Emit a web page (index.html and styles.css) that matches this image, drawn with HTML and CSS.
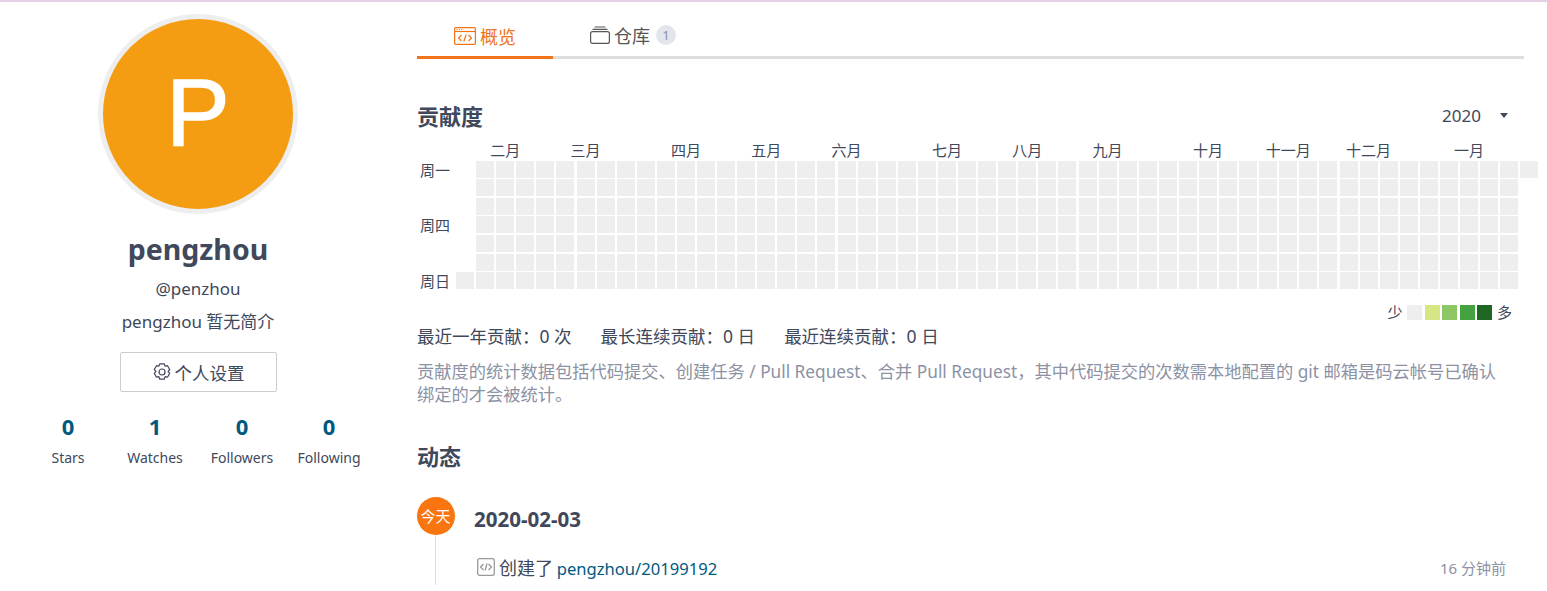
FILE: index.html
```html
<!DOCTYPE html>
<html lang="zh-CN">

<head>
    <meta charset="UTF-8">
    <link rel="stylesheet" href="styles.css">
    <title>pengzhou</title>
</head>

<body>
    <div class="page">
        <aside class="sidebar">
            <div class="avatar">P</div>
            <h2 class="user-name">pengzhou</h2>
            <div class="user-login">@penzhou</div>
            <div class="user-bio">pengzhou 暂无简介</div>
            <a class="settings-btn">
                <svg class="gear" viewBox="0 0 20 20" width="20" height="20" fill="none" stroke="#40485b" stroke-width="1.2">
                    <path d="M7.8 1.8h4.4l.9 2.3 2.4-.4 2.2 3.8-1.6 1.9 1.6 2-2.2 3.8-2.4-.5-.9 2.5H7.8l-.9-2.5-2.4.5-2.2-3.8 1.6-2-1.6-1.9 2.2-3.8 2.4.4z" stroke-linejoin="round"/>
                    <circle cx="10" cy="10" r="3"/>
                </svg>
                个人设置
            </a>
            <div class="stats">
                <div class="stat"><strong>0</strong><span>Stars</span></div>
                <div class="stat"><strong>1</strong><span>Watches</span></div>
                <div class="stat"><strong>0</strong><span>Followers</span></div>
                <div class="stat"><strong>0</strong><span>Following</span></div>
            </div>
        </aside>

        <main class="content">
            <nav class="tabs">
                <a class="tab active">
                    <svg viewBox="0 0 22 18" width="22" height="18" fill="none" stroke="#f1741a" stroke-width="1.2">
                        <rect x="0.6" y="0.6" width="20.8" height="16.8" rx="1"/>
                        <path d="M1 4.5h20"/>
                        <path d="M2.5 2.5h1M5 2.5h1M7.5 2.5h1"/>
                        <path d="M7.5 8l-3 3 3 3M14.5 8l3 3-3 3M12.2 7.5l-2.4 7"/>
                    </svg>
                    概览
                </a>
                <a class="tab">
                    <svg viewBox="0 0 20 18" width="20" height="18" fill="none" stroke="#555" stroke-width="1.2">
                        <rect x="0.6" y="5.6" width="18.8" height="11.8" rx="2"/>
                        <path d="M2.5 3.4h15M4.5 1h11"/>
                    </svg>
                    仓库
                    <span class="tab-count">1</span>
                </a>
            </nav>

            <section class="contrib">
                <div class="section-head">
                    <h3>贡献度</h3>
                    <div class="year-select">2020<i class="caret"></i></div>
                </div>
                <div class="calendar" id="calendar">
                    <span class="week-label row-1">周一</span>
                    <span class="week-label row-4">周四</span>
                    <span class="week-label row-7">周日</span>
                </div>
                <div class="legend">
                    <span class="legend-text">少</span>
                    <i class="swatch lv0"></i>
                    <i class="swatch lv1"></i>
                    <i class="swatch lv2"></i>
                    <i class="swatch lv3"></i>
                    <i class="swatch lv4"></i>
                    <span class="legend-text">多</span>
                </div>
                <div class="summary">
                    <span>最近一年贡献：0 次</span>
                    <span>最长连续贡献：0 日</span>
                    <span>最近连续贡献：0 日</span>
                </div>
                <p class="note">贡献度的统计数据包括代码提交、创建任务 / Pull Request、合并 Pull Request，其中代码提交的次数需本地配置的 git 邮箱是码云帐号已确认绑定的才会被统计。</p>
            </section>

            <section class="activity">
                <h3>动态</h3>
                <div class="timeline">
                    <div class="rail">
                        <div class="today">今天</div>
                        <div class="rail-line"></div>
                    </div>
                    <div class="events">
                        <div class="event-date">2020-02-03</div>
                        <div class="event">
                            <svg viewBox="0 0 18 18" width="18" height="18" fill="none" stroke="#999" stroke-width="1.3">
                                <rect x="0.7" y="0.7" width="16.6" height="16.6" rx="2"/>
                                <path d="M6.5 6l-3 3 3 3M11.5 6l3 3-3 3M10 5.5l-2 7"/>
                            </svg>
                            <span class="event-text">创建了 <a>pengzhou/20199192</a></span>
                            <span class="event-time">16 分钟前</span>
                        </div>
                    </div>
                </div>
            </section>
        </main>
    </div>

    <script>
        // Build the contribution calendar
        const calendar = document.getElementById('calendar');
        const months = [
            ['二月', 2], ['三月', 6], ['四月', 11], ['五月', 15], ['六月', 19], ['七月', 24],
            ['八月', 28], ['九月', 32], ['十月', 37], ['十一月', 41], ['十二月', 45], ['一月', 50]
        ];

        months.forEach(function(month) {
            const label = document.createElement('span');
            label.className = 'month-label';
            label.textContent = month[0];
            label.style.gridColumn = month[1] + 2;
            calendar.appendChild(label);
        });

        for (let week = 0; week < 54; week++) {
            for (let day = 0; day < 7; day++) {
                // first week only has Sunday, last week only has Monday
                if (week === 0 && day < 6) continue;
                if (week === 53 && day > 0) continue;
                const cell = document.createElement('i');
                cell.className = 'cell';
                cell.style.gridColumn = week + 2;
                cell.style.gridRow = day + 2;
                calendar.appendChild(cell);
            }
        }
    </script>
</body>

</html>
```

FILE: styles.css
```css
body {
    margin: 0;
    padding: 0;
    font-family: "Noto Sans", "Noto Sans CJK SC", sans-serif;
    font-size: 17px;
    color: #40485b;
    background-color: #fff;
    border-top: 2px solid #e6d0e6;
}

h2, h3, p {
    margin: 0;
}

.page {
    display: flex;
    height: 589px;
    overflow: hidden;
}

/* sidebar */
.sidebar {
    width: 396px;
    margin-right: 1px;
    flex: none;
    display: flex;
    flex-direction: column;
    align-items: center;
}

.avatar {
    box-sizing: border-box;
    width: 200px;
    height: 200px;
    margin-top: 12px;
    border: 5px solid #eeeeee;
    border-radius: 50%;
    background-color: #f49d12;
    color: #fff;
    font-family: "Liberation Sans", sans-serif;
    font-size: 95px;
    line-height: 187px;
    text-align: center;
    -webkit-text-stroke: 1.5px #fff;
}

.user-name {
    margin-top: 15px;
    font-size: 28.5px;
    line-height: 40px;
    font-weight: bold;
}

.user-login {
    margin-top: 8px;
    line-height: 24px;
}

.user-bio {
    margin-top: 9px;
    line-height: 24px;
}

.settings-btn {
    box-sizing: border-box;
    width: 157px;
    height: 40px;
    margin-top: 18px;
    display: flex;
    align-items: center;
    justify-content: center;
    gap: 3px;
    border: 1px solid #ccc;
    border-radius: 2px;
    font-size: 17.5px;
}

.stats {
    display: flex;
    width: 348px;
    margin: 20px 0 0 1px;
}

.stat {
    flex: 1;
    display: flex;
    flex-direction: column;
    align-items: center;
    gap: 7px;
}

.stat strong {
    color: #005980;
    font-size: 22px;
    line-height: 28px;
}

.stat span {
    font-size: 14px;
    line-height: 22px;
}

/* main column */
.content {
    width: 1107px;
    margin-left: 20px;
    flex: none;
}

.tabs {
    display: flex;
    height: 54px;
    border-bottom: 3px solid #ddd;
}

.tab {
    width: 136px;
    height: 57px;
    box-sizing: border-box;
    padding: 8px 0 0 37px;
    display: flex;
    align-items: center;
    gap: 4px;
    font-size: 18px;
    color: #555;
    margin-bottom: -3px;
    white-space: nowrap;
}

.tab.active {
    color: #f1741a;
    border-bottom: 3px solid #f1741a;
    padding-top: 13px;
}

.tab-count {
    width: 20px;
    height: 20px;
    flex: none;
    margin-left: 2px;
    border-radius: 50%;
    background-color: #e3e5ec;
    color: #8c92a4;
    font-size: 13px;
    line-height: 20px;
    text-align: center;
}

.section-head {
    display: flex;
    justify-content: space-between;
    align-items: center;
    margin-top: 40px;
    height: 34px;
}

h3 {
    font-size: 22px;
    line-height: 34px;
    font-weight: bold;
}

.year-select {
    display: flex;
    align-items: center;
    gap: 19px;
    padding: 0 16px 2px 0;
}

.caret {
    width: 0;
    height: 0;
    border-left: 4.5px solid transparent;
    border-right: 4.5px solid transparent;
    border-top: 5px solid #40485b;
}

/* calendar */
.calendar {
    display: grid;
    grid-template-columns: 37px repeat(54, 18px);
    grid-template-rows: 20px repeat(7, 17px);
    column-gap: 2.09px;
    row-gap: 1.6px;
    margin-top: 6px;
}

.month-label {
    grid-row: 1;
    justify-self: center;
    white-space: nowrap;
    font-size: 15px;
    line-height: 23px;
}

.week-label {
    grid-column: 1;
    font-size: 15px;
    line-height: 18px;
    padding-left: 3px;
    white-space: nowrap;
}

.row-1 { grid-row: 2; }
.row-4 { grid-row: 5; }
.row-7 { grid-row: 8; }

.cell {
    background-color: #eeeeee;
}

.legend {
    display: flex;
    justify-content: flex-end;
    align-items: center;
    gap: 2.5px;
    margin-top: 15px;
    padding-right: 12px;
    height: 16px;
}

.legend-text {
    font-size: 15px;
    line-height: 16px;
}

.legend-text:first-child {
    margin-right: 2px;
}

.legend-text:last-child {
    margin-left: 2px;
}

.swatch {
    width: 15px;
    height: 15px;
}

.lv0 { background-color: #eeeeee; margin-right: 0.5px; }
.lv1 { background-color: #d6e685; }
.lv2 { background-color: #8cc665; }
.lv3 { background-color: #44a340; }
.lv4 { background-color: #1e6823; }

.summary {
    display: flex;
    gap: 29px;
    margin-top: 4px;
    font-size: 17.5px;
    line-height: 24px;
}

.note {
    max-width: 1090px;
    margin-top: 12px;
    color: #8c92a4;
    font-size: 17.25px;
    line-height: 23px;
}

/* activity */
.activity {
    margin-top: 33px;
}

.timeline {
    display: flex;
    margin-top: 24px;
}

.rail {
    width: 37px;
    margin-right: 1px;
    flex: none;
    display: flex;
    flex-direction: column;
    align-items: center;
}

.today {
    width: 38px;
    height: 38px;
    flex: none;
    border-radius: 50%;
    background-color: #f9750f;
    color: #fff;
    font-size: 15px;
    line-height: 38px;
    text-align: center;
}

.rail-line {
    width: 1px;
    height: 50px;
    background-color: #ddd;
}

.events {
    flex: 1;
    margin-left: 19px;
    padding-right: 18px;
}

.event-date {
    font-size: 20.5px;
    font-weight: bold;
    line-height: 44px;
}

.event {
    display: flex;
    align-items: center;
    margin-top: 13px;
    padding-left: 3px;
}

.event-text {
    margin-left: 4px;
    flex: 1;
    font-size: 18px;
    word-spacing: -1px;
}

.event-text a {
    color: #005980;
    font-size: 16.6px;
}

.event-time {
    font-size: 15px;
    color: #8c92a4;
}
```
